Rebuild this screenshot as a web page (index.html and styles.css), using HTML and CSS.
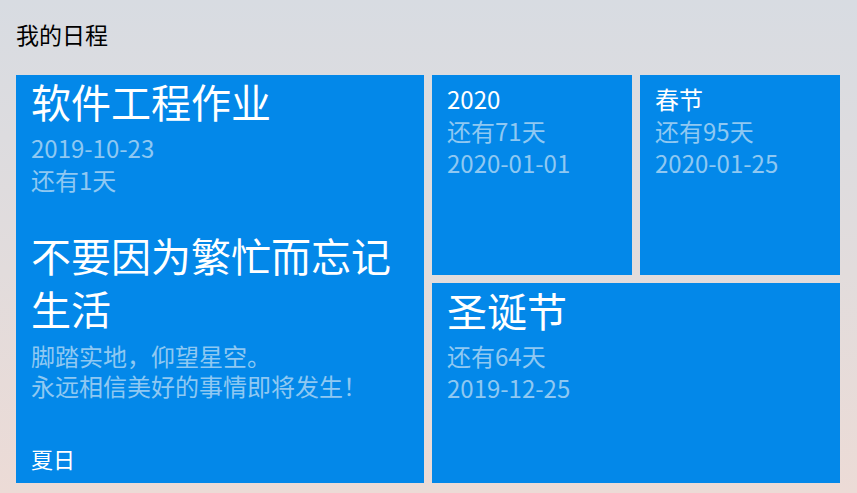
FILE: index.html
```html
<!DOCTYPE html>
<html lang="zh-CN">
<head>
<meta charset="utf-8">
<title>我的日程</title>
<link rel="stylesheet" href="styles.css">
</head>
<body>
<div class="page">
  <header class="page-title">我的日程</header>
  <main class="tiles">
    <section class="tile tile-large">
      <div class="tile-title">软件工程作业</div>
      <div class="tile-line tile-date">2019-10-23</div>
      <div class="tile-line">还有1天</div>
      <div class="tile-quote">不要因为繁忙而忘记生活</div>
      <div class="tile-sub">脚踏实地，仰望星空。<br>永远相信美好的事情即将发生！</div>
      <div class="tile-footer">夏日</div>
    </section>
    <section class="tile tile-small">
      <div class="tile-name">2020</div>
      <div class="tile-line">还有71天</div>
      <div class="tile-line">2020-01-01</div>
    </section>
    <section class="tile tile-small">
      <div class="tile-name">春节</div>
      <div class="tile-line">还有95天</div>
      <div class="tile-line">2020-01-25</div>
    </section>
    <section class="tile tile-wide">
      <div class="tile-title">圣诞节</div>
      <div class="tile-line tile-wide-first">还有64天</div>
      <div class="tile-line">2019-12-25</div>
    </section>
  </main>
</div>
</body>
</html>
```
FILE: styles.css
```css
html, body {
  margin: 0;
  padding: 0;
  height: 100%;
}
body {
  background: linear-gradient(to bottom, #d8dce2 0%, #e2dcdc 55%, #ecdbd6 100%);
  font-family: "Noto Sans CJK SC", "Noto Sans", sans-serif;
  color: #000;
  overflow: hidden;
}
.page {
  display: flex;
  flex-direction: column;
}
.page-title {
  font-size: 23px;
  line-height: 32px;
  padding: 18px 16px 25px;
  color: #000;
}
.tiles {
  display: grid;
  grid-template-columns: repeat(4, 200px);
  grid-template-rows: 200px 200px;
  gap: 8px;
  padding-left: 16px;
}
.tile {
  background: #0388e9;
  color: #fff;
  display: flex;
  flex-direction: column;
  padding: 0 15px;
  box-sizing: border-box;
}
.tile-large {
  grid-column: 1 / span 2;
  grid-row: 1 / span 2;
  padding-left: 15px;
  padding-bottom: 10px;
}
.tile-wide {
  grid-column: 3 / span 2;
  grid-row: 2;
  padding-top: 1px;
}
.tile-small {
  padding-top: 8px;
}
.tile-title {
  font-size: 40px;
  line-height: 53px;
  margin-bottom: 4px;
}
.tile-wide .tile-title {
  margin-bottom: 3px;
}
.tile-line {
  font-size: 24px;
  line-height: 32px;
  color: #8fc8f2;
}
.tile-name {
  font-size: 24px;
  line-height: 32px;
  color: #fff;
}
.tile-quote {
  font-size: 40px;
  line-height: 53px;
  margin-top: 33px;
  color: #fff;
}
.tile-sub {
  font-size: 24px;
  line-height: 30px;
  margin-top: 6px;
  color: #8fc8f2;
}
.tile-footer {
  margin-top: auto;
  font-size: 22px;
  line-height: 30px;
  color: #fff;
}
```
